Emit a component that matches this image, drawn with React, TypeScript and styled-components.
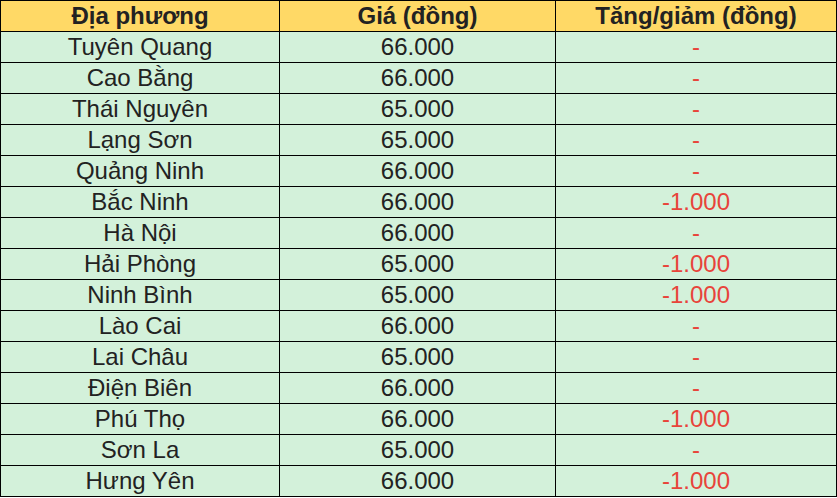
import { ReactElement } from 'react';
import styled, { createGlobalStyle } from 'styled-components';

const GlobalStyle = createGlobalStyle`
  html, body {
    margin: 0;
    padding: 0;
    background: #ffffff;
  }
`;

const Table = styled.table`
  border-collapse: collapse;
  width: 836px;
  table-layout: fixed;
  font-family: 'Liberation Sans', Arial, sans-serif;
  font-size: 24px;
  color: #222222;
`;

const HeadCell = styled.th`
  background: #ffd966;
  border: 1px solid #000000;
  height: 30px;
  padding: 0;
  font-weight: 700;
  text-align: center;
  line-height: 28px;
  overflow: hidden;
`;

const Cell = styled.td<{ $down?: boolean }>`
  background: #d3f1da;
  border: 1px solid #000000;
  height: 30px;
  padding: 0;
  text-align: center;
  line-height: 28px;
  overflow: hidden;
  color: ${({ $down }) => ($down ? '#e8443a' : '#222222')};
`;

type Row = { place: string; price: string; change: string };

const rows: Row[] = [
  { place: 'Tuyên Quang', price: '66.000', change: '-' },
  { place: 'Cao Bằng', price: '66.000', change: '-' },
  { place: 'Thái Nguyên', price: '65.000', change: '-' },
  { place: 'Lạng Sơn', price: '65.000', change: '-' },
  { place: 'Quảng Ninh', price: '66.000', change: '-' },
  { place: 'Bắc Ninh', price: '66.000', change: '-1.000' },
  { place: 'Hà Nội', price: '66.000', change: '-' },
  { place: 'Hải Phòng', price: '65.000', change: '-1.000' },
  { place: 'Ninh Bình', price: '65.000', change: '-1.000' },
  { place: 'Lào Cai', price: '66.000', change: '-' },
  { place: 'Lai Châu', price: '65.000', change: '-' },
  { place: 'Điện Biên', price: '66.000', change: '-' },
  { place: 'Phú Thọ', price: '66.000', change: '-1.000' },
  { place: 'Sơn La', price: '65.000', change: '-' },
  { place: 'Hưng Yên', price: '66.000', change: '-1.000' },
];

export default function App(): ReactElement {
  return (
    <>
      <GlobalStyle />
      <Table>
        <colgroup>
          <col style={{ width: 279 }} />
          <col style={{ width: 276 }} />
          <col style={{ width: 281 }} />
        </colgroup>
        <thead>
          <tr>
            <HeadCell>Địa phương</HeadCell>
            <HeadCell>Giá (đồng)</HeadCell>
            <HeadCell>Tăng/giảm (đồng)</HeadCell>
          </tr>
        </thead>
        <tbody>
          {rows.map((r) => (
            <tr key={r.place}>
              <Cell>{r.place}</Cell>
              <Cell>{r.price}</Cell>
              <Cell $down>{r.change}</Cell>
            </tr>
          ))}
        </tbody>
      </Table>
    </>
  );
}
